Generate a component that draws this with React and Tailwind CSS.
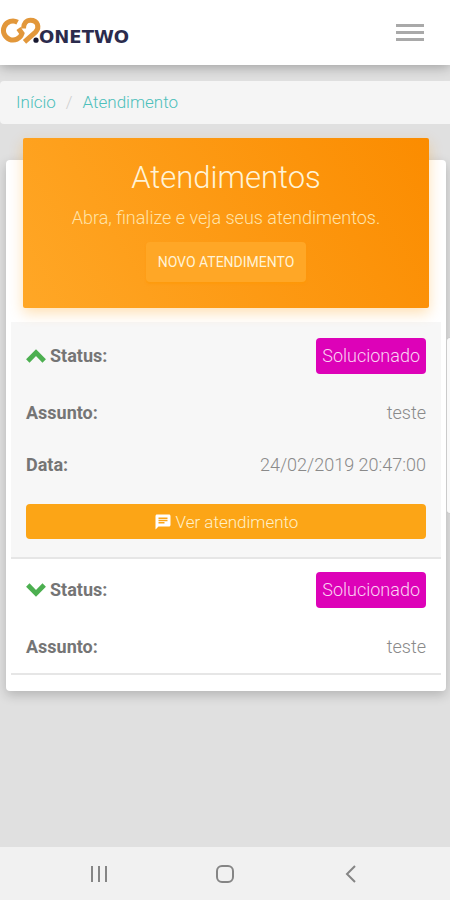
import { useState } from "react"

const tickets = [
  { id: 1, status: "Solucionado", subject: "teste", date: "24/02/2019 20:47:00" },
  { id: 2, status: "Solucionado", subject: "teste", date: "24/02/2019 20:47:00" },
]

function Logo() {
  return (
    <a href="#" aria-label="02.ONETWO" className="flex items-center">
      <svg width="134" height="34" viewBox="0 0 134 34">
        <g fill="none" stroke="#e2973a" strokeWidth="5">
          <path d="M17.6 6.200 A9.500 9.500 0 1 0 22 17.500 L18.500 12.500" />
          <path d="M23.500 12.500 C23.500 7.500 26.500 4.200 30.500 4.200 C37.800 4.200 40 11.500 35.500 16.200 L24.500 25.800" />
        </g>
        <circle cx="36" cy="24.2" r="2.6" fill="#17172f" />
        <text x="39" y="27" fontSize="18" className="font-['DejaVu_Sans'] font-bold" fill="#2b2b4d">ONETWO</text>
      </svg>
    </a>
  )
}

function Header() {
  return (
    <header className="relative z-10 flex h-[65px] items-center justify-between bg-white pr-[26px] shadow-[0_2px_12px_rgba(0,0,0,0.3)]">
      <Logo />
      <button type="button" aria-label="Menu" className="flex w-7 flex-col gap-1 py-2">
        <span className="h-[3px] bg-[#a9a9a9]"></span>
        <span className="h-[3px] bg-[#a9a9a9]"></span>
        <span className="h-[3px] bg-[#a9a9a9]"></span>
      </button>
    </header>
  )
}

function Chevron({ open }) {
  return (
    <svg width="20" height="14" viewBox="0 0 20 14" fill="none" stroke="#4caf50" strokeWidth="4.8">
      {open ? <path d="M1.8 12 L10 3.6 L18.2 12" /> : <path d="M1.8 2 L10 10.4 L18.2 2" />}
    </svg>
  )
}

function Ticket({ ticket, defaultOpen }) {
  const [open, setOpen] = useState(defaultOpen)

  return (
    <li className={`border-b-2 border-[#e6e6e6] px-[15px] text-lg leading-6 ${open ? "bg-[#f7f7f7] pt-4 pb-[18px]" : "pt-[13px]"}`}>
      <div className="flex h-9 items-center justify-between">
        <button type="button" className="flex items-center gap-1 font-bold text-[#757575]" onClick={() => setOpen(!open)}>
          <Chevron open={open} />
          Status:
        </button>
        <span className="rounded bg-[#dd02b8] px-[6px] py-[6px] text-[#fbd3f3]">{ticket.status}</span>
      </div>
      <div className="mt-[13px] flex h-[52px] items-center justify-between">
        <span className="font-bold text-[#757575]">Assunto:</span>
        <span>{ticket.subject}</span>
      </div>
      {open && (
        <>
          <div className="flex h-[52px] items-center justify-between">
            <span className="font-bold text-[#757575]">Data:</span>
            <span>{ticket.date}</span>
          </div>
          <button type="button" className="mt-[13px] flex h-[35px] w-full items-center justify-center gap-1 rounded bg-[#fca516] text-[17px] text-[#fff0c8]">
            <svg width="18" height="18" viewBox="0 0 24 24" fill="#fff">
              <path d="M20 2H4c-1.1 0-2 .9-2 2v18l4-4h14c1.1 0 2-.9 2-2V4c0-1.100-.9-2-2-2zM6 9h12v2H6V9zm8 5H6v-2h8v2zm4-6H6V6h12v2z" />
            </svg>
            Ver atendimento
          </button>
        </>
      )}
    </li>
  )
}

function App() {
  return (
    <div className="relative flex min-h-screen flex-col bg-[#e0e0e0] font-['Roboto',sans-serif] text-[17px] font-light text-[#8a8a8a]">
      <Header />
      <main className="flex-1">
        <nav className="mt-4 flex h-[43px] items-center gap-2 rounded-l bg-[#f5f5f5] px-4 text-[#4dc0bb]">
          <a href="#">Início</a>
          <span className="px-[2px] text-[#cfcfcf]">/</span>
          <a href="#">Atendimento</a>
        </nav>

        <section className="mt-9 mr-1 ml-[6px] rounded bg-white px-[5px] pb-4 shadow-[0_4px_12px_rgba(0,0,0,0.2)]">
          <div className="relative -top-[22px] -mb-[8px] mx-3 flex h-[170px] flex-col items-center rounded-xs bg-linear-[60deg,#ffa726,#fb8c00] pt-5 shadow-[0_5px_14px_rgba(255,152,0,0.3)]">
            <h1 className="text-[31px] leading-10 text-[#fff3d6]">Atendimentos</h1>
            <p className="mt-2 text-lg leading-6 text-[#ffe3a8]">Abra, finalize e veja seus atendimentos.</p>
            <button type="button" className="mt-3 h-10 rounded bg-[#ffa726] px-3 text-sm font-normal text-[#fff3d6] shadow-[0_2px_2px_rgba(255,152,0,0.5)]">
              NOVO ATENDIMENTO
            </button>
          </div>
          <ul>
            {tickets.map((ticket, index) => (
              <Ticket key={ticket.id} ticket={ticket} defaultOpen={index === 0} />
            ))}
          </ul>
        </section>
      </main>

      {/* edge panel handle */}
      <div className="absolute top-[337px] right-0 h-[177px] w-1 rounded-l border border-r-0 border-[#cccccc] bg-[#fafafa]"></div>

      <footer className="flex h-[53px] items-center justify-around bg-[#f1f1f1] px-9 text-[#858585]">
        <button type="button" aria-label="Recentes">
          <svg width="20" height="20" viewBox="0 0 20 20" fill="none" stroke="currentColor" strokeWidth="2">
            <path d="M3 2v16M10 2v16M17 2v16" />
          </svg>
        </button>
        <button type="button" aria-label="Início">
          <svg width="20" height="20" viewBox="0 0 20 20" fill="none" stroke="currentColor" strokeWidth="2">
            <rect x="2" y="2" width="16" height="16" rx="5" />
          </svg>
        </button>
        <button type="button" aria-label="Voltar">
          <svg width="20" height="20" viewBox="0 0 20 20" fill="none" stroke="currentColor" strokeWidth="2">
            <path d="M14 2L6 10l8 8" />
          </svg>
        </button>
      </footer>
    </div>
  )
}

export default App
